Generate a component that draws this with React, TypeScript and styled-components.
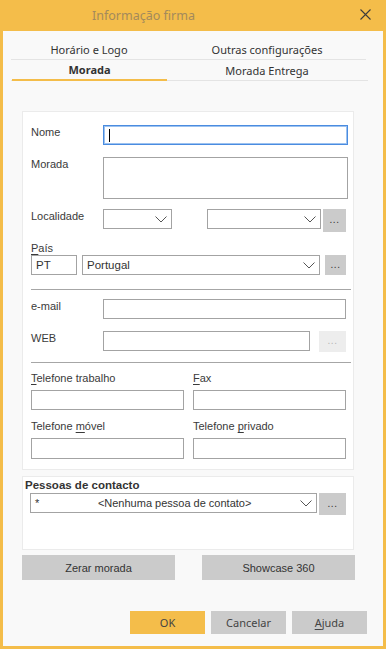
import React from 'react'
import styled, { createGlobalStyle } from 'styled-components'

const GlobalStyle = createGlobalStyle`
  html, body {
    margin: 0;
    padding: 0;
    background: #f9f9f9;
  }
  * {
    box-sizing: border-box;
  }
`

const orange = '#f4bd4a'

const Window = styled.div`
  width: 386px;
  height: 649px;
  border: 3px solid ${orange};
  border-top: 0;
  background: #f9f9f9;
  display: flex;
  flex-direction: column;
  font-family: "Liberation Sans", Arial, sans-serif;
  font-size: 11px;
  color: #333;
`

const TitleBar = styled.div`
  height: 31px;
  margin: 0 -3px;
  background: ${orange};
  display: flex;
  align-items: center;
  padding-left: 92px;
  position: relative;
`

const Title = styled.div`
  font-family: "Noto Sans", sans-serif;
  font-size: 12.5px;
  color: #a38a5c;
  padding-bottom: 1px;
`

const CloseButton = styled.div`
  position: absolute;
  right: 15px;
  top: 9px;
  width: 11px;
  height: 11px;
  display: flex;
`

const Tabs = styled.div`
  padding: 8px 0 0 8px;
`

const TabRow = styled.div<{ $top?: boolean }>`
  display: grid;
  grid-template-columns: 156px 200px;
  width: ${p => (p.$top ? 355 : 357)}px;
  border-bottom: 1px solid #e4e4e4;
`

const Tab = styled.div<{ $active?: boolean }>`
  height: ${p => (p.$active ? 21 : 20)}px;
  display: flex;
  align-items: center;
  justify-content: center;
  font-family: "Noto Sans", sans-serif;
  font-size: 11px;
  color: #333;
  font-weight: ${p => (p.$active ? 700 : 400)};
  border-bottom: ${p => (p.$active ? `2px solid ${orange}` : '0')};
  margin-bottom: ${p => (p.$active ? -1 : 0)}px;
  padding-bottom: ${p => (p.$active ? 1 : 0)}px;
  margin-left: ${p => (p.$active ? 1 : 0)}px;
`

const Body = styled.div`
  padding: 30px 0 0 19px;
`

const Panel = styled.div<{ $compact?: boolean }>`
  width: 332px;
  background: #fff;
  border: 1px solid #ebebeb;
  padding: ${p => (p.$compact ? '1px 7px 0 2px' : '13px 7px 10px 8px')};
  height: ${p => (p.$compact ? '74px' : 'auto')};
  margin-bottom: 6px;
`

const Row = styled.div<{ $gap?: number }>`
  display: flex;
  align-items: flex-start;
  margin-bottom: ${p => p.$gap ?? 0}px;
`

const Label = styled.div<{ $w?: number }>`
  width: ${p => p.$w ?? 72}px;
  flex: none;
  padding-top: 0;
  line-height: 14px;
  color: #3a3a3a;
`

const StackLabel = styled.div<{ $gap?: number }>`
  line-height: 14px;
  height: 14px;
  color: #3a3a3a;
  margin-bottom: ${p => p.$gap ?? 5}px;
  u {
    text-decoration: underline;
    text-underline-offset: 2px;
  }
`

const Input = styled.div<{ $w: number; $h?: number; $focus?: boolean; $ml?: number }>`
  width: ${p => p.$w}px;
  height: ${p => p.$h ?? 20}px;
  flex: none;
  background: #fff;
  border: 1px solid ${p => (p.$focus ? '#4a8ce0' : '#a3a3a3')};
  box-shadow: ${p => (p.$focus ? 'inset 0 0 0 1px #9cc2f0' : 'none')};
  margin-left: ${p => p.$ml ?? 0}px;
  display: flex;
  align-items: center;
  padding-left: 4px;
  font-size: 11.5px;
  color: #333;
`

const Caret = styled.div`
  width: 1px;
  height: 13px;
  background: #000;
  margin-left: 1px;
`

const SelectBox = styled(Input)`
  position: relative;
  padding-right: 22px;
`

const Chevron = styled.svg`
  position: absolute;
  right: 4px;
  top: 6px;
`

const DotsButton = styled.div<{ $w: number; $h: number; $ml: number; $disabled?: boolean }>`
  width: ${p => p.$w}px;
  height: ${p => p.$h}px;
  margin-left: ${p => p.$ml}px;
  flex: none;
  background: ${p => (p.$disabled ? '#ededed' : '#cbcbcb')};
  color: ${p => (p.$disabled ? '#b5b5b5' : '#333')};
  display: flex;
  align-items: center;
  justify-content: center;
  font-size: 10px;
  padding-bottom: 2px;
  letter-spacing: 0.5px;
`

const Separator = styled.div<{ $top: number; $bottom: number }>`
  height: 1px;
  background: #a6a6a6;
  margin: ${p => p.$top}px -5px ${p => p.$bottom}px 0;
`

const Column = styled.div<{ $ml?: number }>`
  display: flex;
  flex-direction: column;
  margin-left: ${p => p.$ml ?? 0}px;
`

const SectionTitle = styled.div`
  font-weight: 700;
  font-size: 11.5px;
  line-height: 14px;
  height: 15px;
  color: #333;
`

const ContactText = styled.div`
  flex: 1;
  display: flex;
  font-size: 11px;
  color: #333;
  span:last-child {
    flex: 1;
    text-align: center;
    padding-left: 16px;
  }
`

const ActionRow = styled.div`
  display: flex;
  justify-content: space-between;
  width: 333px;
  margin-top: -1px;
`

const ActionButton = styled.div`
  width: 153px;
  height: 25px;
  background: #cbcbcb;
  display: flex;
  align-items: center;
  justify-content: center;
  font-size: 11px;
  color: #333;
`

const Footer = styled.div`
  margin-top: auto;
  display: flex;
  justify-content: flex-end;
  gap: 6px;
  padding: 0 16px 12px 0;
`

const FooterButton = styled.div<{ $primary?: boolean }>`
  width: 75px;
  height: 23px;
  background: ${p => (p.$primary ? orange : '#cbcbcb')};
  display: flex;
  align-items: center;
  justify-content: center;
  font-family: "Noto Sans", sans-serif;
  font-size: 11px;
  color: #444;
  u {
    text-underline-offset: 2px;
  }
`

function Select({ w, ml, children }: { w: number; ml?: number; children?: React.ReactNode }) {
  return (
    <SelectBox $w={w} $ml={ml}>
      {children}
      <Chevron width="12" height="7" viewBox="0 0 12 7">
        <path d="M0.5 0.5 L6 6 L11.5 0.5" fill="none" stroke="#555" strokeWidth="1" />
      </Chevron>
    </SelectBox>
  )
}

function App() {
  return (
    <>
      <GlobalStyle />
      <Window>
        <TitleBar>
          <Title>Informação firma</Title>
          <CloseButton>
            <svg width="11" height="11" viewBox="0 0 11 11">
              <path d="M0.5 0.5 L10.5 10.5 M10.5 0.5 L0.5 10.5" stroke="#3c3c3c" strokeWidth="1.1" />
            </svg>
          </CloseButton>
        </TitleBar>

        <Tabs>
          <TabRow $top>
            <Tab>Horário e Logo</Tab>
            <Tab>Outras configurações</Tab>
          </TabRow>
          <TabRow>
            <Tab $active>Morada</Tab>
            <Tab>Morada Entrega</Tab>
          </TabRow>
        </Tabs>

        <Body>
          <Panel>
            <Row $gap={12}>
              <Label>Nome</Label>
              <Input $w={245} $focus>
                <Caret />
              </Input>
            </Row>
            <Row $gap={10}>
              <Label>Morada</Label>
              <Input $w={245} $h={42} />
            </Row>
            <Row $gap={9}>
              <Label>Localidade</Label>
              <Select w={69} />
              <Select w={114} ml={35} />
              <DotsButton $w={23} $h={23} $ml={2}>...</DotsButton>
            </Row>
            <StackLabel $gap={0}>
              <u>P</u>aís
            </StackLabel>
            <Row>
              <Input $w={46}>PT</Input>
              <Select w={238} ml={5}>Portugal</Select>
              <DotsButton $w={21} $h={20} $ml={5}>...</DotsButton>
            </Row>
            <Separator $top={14} $bottom={9} />
            <Row $gap={12}>
              <Label>e-mail</Label>
              <Input $w={243} />
            </Row>
            <Row>
              <Label>WEB</Label>
              <Input $w={207} />
              <DotsButton $w={27} $h={21} $ml={9} $disabled>...</DotsButton>
            </Row>
            <Separator $top={10} $bottom={8} />
            <Row $gap={9}>
              <Column>
                <StackLabel>
                  <u>T</u>elefone trabalho
                </StackLabel>
                <Input $w={153} />
              </Column>
              <Column $ml={9}>
                <StackLabel>
                  <u>F</u>ax
                </StackLabel>
                <Input $w={153} />
              </Column>
            </Row>
            <Row>
              <Column>
                <StackLabel>
                  Telefone <u>m</u>óvel
                </StackLabel>
                <Input $w={153} $h={21} />
              </Column>
              <Column $ml={9}>
                <StackLabel>
                  Telefone <u>p</u>rivado
                </StackLabel>
                <Input $w={153} $h={21} />
              </Column>
            </Row>
          </Panel>

          <Panel $compact>
            <SectionTitle>Pessoas de contacto</SectionTitle>
            <Row>
              <SelectBox $w={287} $ml={5}>
                <ContactText>
                  <span>*</span>
                  <span>&lt;Nenhuma pessoa de contato&gt;</span>
                </ContactText>
                <Chevron width="12" height="7" viewBox="0 0 12 7">
                  <path d="M0.5 0.5 L6 6 L11.5 0.5" fill="none" stroke="#555" strokeWidth="1" />
                </Chevron>
              </SelectBox>
              <DotsButton $w={27} $h={22} $ml={2}>...</DotsButton>
            </Row>
          </Panel>

          <ActionRow>
            <ActionButton>Zerar morada</ActionButton>
            <ActionButton>Showcase 360</ActionButton>
          </ActionRow>
        </Body>

        <Footer>
          <FooterButton $primary>OK</FooterButton>
          <FooterButton>Cancelar</FooterButton>
          <FooterButton>
            <u>A</u>juda
          </FooterButton>
        </Footer>
      </Window>
    </>
  )
}

export default App
